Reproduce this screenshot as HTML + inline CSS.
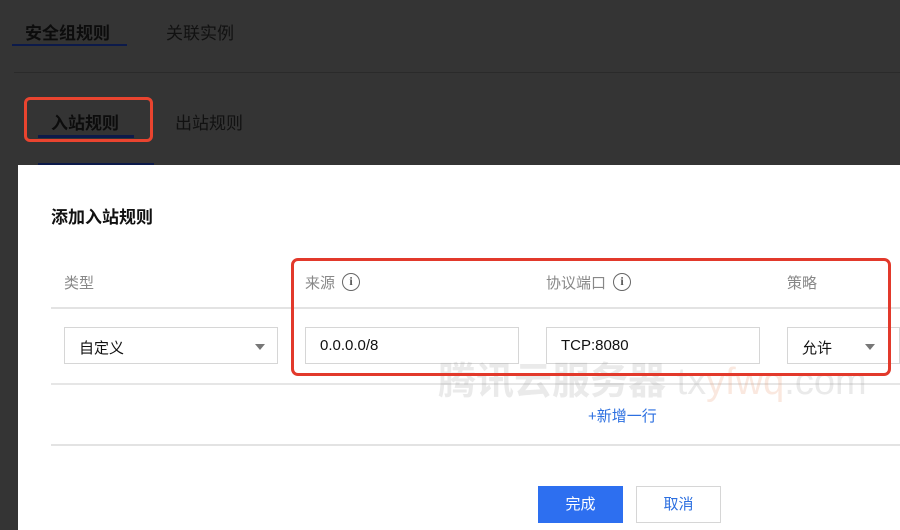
<!DOCTYPE html>
<html><head><meta charset="utf-8"><style>
*{margin:0;padding:0;box-sizing:border-box}
body{width:900px;height:530px;overflow:hidden;background:#343434;font-family:"Liberation Sans","Noto Sans CJK SC",sans-serif;position:relative}
.a{position:absolute}
.t{font-size:17px;color:#0c0c0c}
.h{font-size:15px;color:#888;display:flex;align-items:center;height:20px}
.in{position:absolute;height:37px;border:1px solid #d6d6d6;background:#fff;font-size:15px;color:#111;padding:9px 14px}
.info{display:inline-block;width:18px;height:18px;border:1.6px solid #666;border-radius:50%;font-size:12px;line-height:15px;text-align:center;color:#555;font-weight:bold;margin-left:7px;font-family:"Liberation Serif",serif}
.tri{position:absolute;width:0;height:0;border-left:5px solid transparent;border-right:5px solid transparent;border-top:6px solid #777}
</style></head><body>
<div class="a t" style="left:25px;top:19px;font-weight:bold">安全组规则</div>
<div class="a" style="left:12px;top:44px;width:115px;height:2px;background:#0c1a4a"></div>
<div class="a t" style="left:166px;top:19px;color:#111">关联实例</div>
<div class="a" style="left:14px;top:72px;width:886px;height:1px;background:#2a2a2a"></div>
<div class="a t" style="left:51px;top:109px;font-weight:bold">入站规则</div>
<div class="a t" style="left:175px;top:109px;color:#111">出站规则</div>
<div class="a" style="left:38px;top:135px;width:96px;height:3px;background:#0c1a4a"></div>
<div class="a" style="left:24px;top:97px;width:129px;height:45px;border:3px solid #e9442f;border-radius:6px"></div>
<div class="a" style="left:38px;top:163px;width:116px;height:3px;background:#0c1a4a"></div>
<div class="a" style="left:18px;top:165px;width:882px;height:365px;background:#fff"></div>
<div class="a" style="left:51px;top:203px;font-size:17px;font-weight:bold;color:#111">添加入站规则</div>
<div class="a h" style="left:64px;top:272px">类型</div>
<div class="a h" style="left:305px;top:272px">来源<span class="info">i</span></div>
<div class="a h" style="left:546px;top:272px">协议端口<span class="info">i</span></div>
<div class="a h" style="left:787px;top:272px">策略</div>
<div class="a" style="left:51px;top:307px;width:849px;height:2px;background:#e3e3e3"></div>
<div class="in" style="left:64px;top:327px;width:214px">自定义</div><div class="tri" style="left:255px;top:344px"></div>
<div class="in" style="left:305px;top:327px;width:214px">0.0.0.0/8</div>
<div class="in" style="left:546px;top:327px;width:214px">TCP:8080</div>
<div class="in" style="left:787px;top:327px;width:113px">允许</div><div class="tri" style="left:865px;top:344px"></div>
<div class="a" style="left:51px;top:383px;width:849px;height:2px;background:#e6e6e6"></div>
<div class="a" style="left:438px;top:350px;font-size:38px;font-weight:bold;color:rgba(150,150,150,.2);white-space:nowrap">腾讯云服务器 <span style="font-weight:normal">tx<span style="color:rgba(230,150,110,.22)">yfwq</span>.com</span></div>
<div class="a" style="left:588px;top:405px;font-size:15px;color:#2c6fe0">+新增一行</div>
<div class="a" style="left:51px;top:444px;width:849px;height:2px;background:#e3e3e3"></div>
<div class="a" style="left:291px;top:258px;width:600px;height:118px;border:3px solid #e2392b;border-radius:7px"></div>
<div class="a" style="left:538px;top:486px;width:85px;height:37px;background:#2d6ff0;color:#fff;font-size:15px;text-align:center;line-height:37px">完成</div>
<div class="a" style="left:636px;top:486px;width:85px;height:37px;border:1px solid #d6d6d6;color:#2c6fe0;font-size:15px;text-align:center;line-height:35px">取消</div>
</body></html>
